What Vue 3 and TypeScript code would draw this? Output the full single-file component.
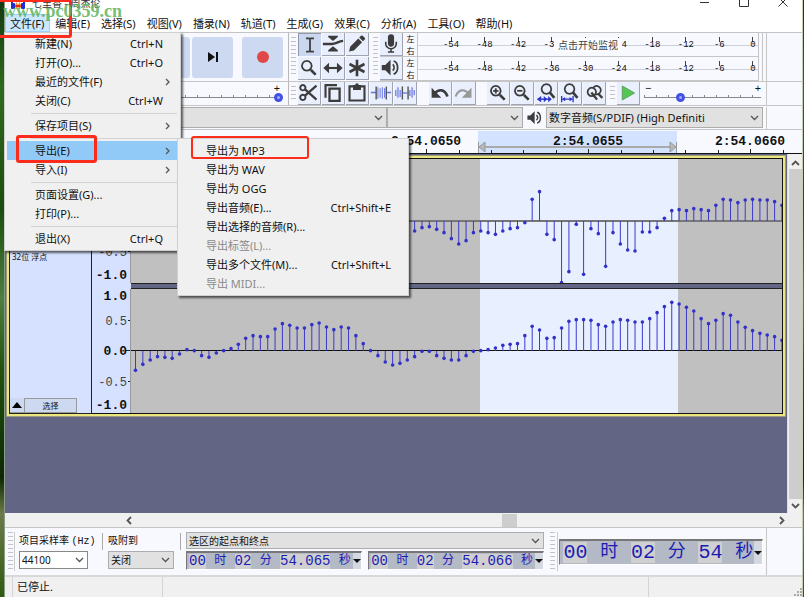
<script setup lang="ts">
import { ref } from 'vue'

interface Shape { d: string; w?: number; c?: string }
interface MenuRow { label?: string; keys?: string; sub?: boolean; active?: boolean; off?: boolean }

const menus = ['文件(F)', '编辑(E)', '选择(S)', '视图(V)', '播录(N)', '轨道(T)', '生成(G)', '效果(C)', '分析(A)', '工具(O)', '帮助(H)']

const fileMenu: MenuRow[] = [
  { label: '新建(N)', keys: 'Ctrl+N' },
  { label: '打开(O)...', keys: 'Ctrl+O' },
  { label: '最近的文件(F)', sub: true },
  { label: '关闭(C)', keys: 'Ctrl+W' },
  {},
  { label: '保存项目(S)', sub: true },
  {},
  { label: '导出(E)', sub: true, active: true },
  { label: '导入(I)', sub: true },
  {},
  { label: '页面设置(G)...' },
  { label: '打印(P)...' },
  {},
  { label: '退出(X)', keys: 'Ctrl+Q' },
]

const exportMenu: MenuRow[] = [
  { label: '导出为 MP3' },
  { label: '导出为 WAV' },
  { label: '导出为 OGG' },
  { label: '导出音频(E)...', keys: 'Ctrl+Shift+E' },
  { label: '导出选择的音频(R)...' },
  { label: '导出标签(L)...', off: true },
  { label: '导出多个文件(M)...', keys: 'Ctrl+Shift+L' },
  { label: '导出 MIDI...', off: true },
]

const lens = 'M10 4.5a5.5 5.5 0 1 0 .01 0zM14 14l6 6'
const icons: Record<string, Shape[]> = {
  ibeam: [{ d: 'M8 5h3.5l1 1 1-1H17M12.5 6v13M8 20h3.5l1-1 1 1H17', w: 2 }],
  envelope: [{ d: 'M7 3h11v1.5L12.5 9 7 4.500zM7 21h11v-1.500L12.500 15 7 19.500z' }, { d: 'M1 12.500h10c5 0 7-3 13-3.500', w: 2.6 }],
  pencil: [{ d: 'M3.500 21l1.200-5.500L14 6.200l4.300 4.300L9 19.800zM15 5.200l2-2a1.500 1.500 0 0 1 2 0L21.300 5.500a1.500 1.500 0 0 1 0 2l-2 2z' }],
  lens: [{ d: lens, w: 2 }, { d: 'M15 15l5 5', w: 3 }],
  shift: [{ d: 'M5 12.500h15', w: 2.4 }, { d: 'M8 6.500v12l-6.500-6zM17 6.500v12l6.500-6z' }],
  multi: [{ d: 'M12.500 3v19M4 8l17 9M21 8L4 17', w: 3 }],
  mic: [{ d: 'M9 5a3.500 3.500 0 0 1 7 0v7a3.500 3.500 0 0 1-7 0z' }, { d: 'M6.500 10v2a6 6 0 0 0 12 0v-2M12.500 18v4M9 21.500h7', w: 1.8 }],
  speaker: [{ d: 'M2 9h4l6-6v18l-6-6H2z' }, { d: 'M14.500 8.500c2 2 2 5 0 7M15.500 4.500c6 2 6 13 0 15', w: 2 }],
  cut: [{ d: 'M8 8.500L21 20M8 15.500L21 4', w: 2.6 }, { d: 'M5.500 3.500a3 3 0 1 0 .01 0zM5.500 14.500a3 3 0 1 0 .01 0z', w: 2.2 }],
  copy: [{ d: 'M4 18V3.500h13', w: 2.4 }, { d: 'M8.500 7.500h11.500v14H8.500z', w: 2.6 }],
  paste: [{ d: 'M4 5h17v16H4z', w: 2.4 }, { d: 'M8 3.500h2.500a2 2 0 0 1 4 0H17V9H8z' }],
  trim: [{ d: 'M1 12h6M18 12h6', w: 1.6, c: '#6674e0' }, { d: 'M9 6v13M11.500 7v11M14 6v13M16.500 7v11', w: 1.2, c: '#6f7de8' }, { d: 'M7 5v15M18.500 5v15', w: 1.6, c: '#555' }],
  silence: [{ d: 'M2 9v7M4.500 6v12M7 9v8M18 9v7M20.500 6v12M23 9v6', w: 1.6, c: '#7a86ea' }, { d: 'M9.500 5v15M16 5v15', w: 1.6, c: '#555' }, { d: 'M10 12.500h6', w: 1.5, c: '#6674e0' }],
  undo: [{ d: 'M6.500 13C11 7.500 18 8 21 16.500', w: 3 }, { d: 'M3 6.500v11.500h11z' }],
  redo: [{ d: 'M17.500 13C13 7.500 6 8 3 16.500', w: 2.4, c: '#999' }, { d: 'M21 6.500v11.500H10z', c: '#999' }],
  zoomin: [{ d: lens, w: 2 }, { d: 'M7 10h6M10 7v6', w: 2 }, { d: 'M15 15l5 5', w: 3 }],
  zoomout: [{ d: lens, w: 2 }, { d: 'M7 10h6', w: 2 }, { d: 'M15 15l5 5', w: 3 }],
  fitsel: [{ d: 'M13 2.500a5.500 5.500 0 1 0 .01 0z', w: 2 }, { d: 'M17 12l5 6', w: 3 }, { d: 'M4 19.500h14', w: 1.6, c: '#2b35c8' }, { d: 'M7 16v7l-5-3.500zM10 16v7l4-3.500zM15 16v7l4-3.500z', c: '#2b35c8' }],
  fitproj: [{ d: 'M12 2.500a5.500 5.500 0 1 0 .01 0z', w: 2 }, { d: 'M16 12l5 6', w: 3 }, { d: 'M3 16v7M16 16v7M4 19.500h11', w: 1.5, c: '#2b35c8' }, { d: 'M7 17v5l-3.500-2.500zM12 17v5l3.500-2.500z', c: '#2b35c8' }],
  toggle: [{ d: 'M10 6.500a4.800 4.800 0 1 0 .01 0zM12 6a4.800 4.800 0 1 1 2.500 8', w: 2 }, { d: 'M9.500 12l6.500 8M17 13l5 5', w: 2.6 }],
  play: [{ d: 'M6 4.500v16l14-8z', c: '#53c653' }],
}

const toolRows = [['ibeam', 'envelope', 'pencil'], ['lens', 'shift', 'multi']]
const editTools = ['cut', 'copy', 'paste', 'trim', 'silence']
const zoomTools = ['zoomin', 'zoomout', 'fitsel', 'fitproj', 'toggle']
// The record meter's hint lies over the -30 mark, which is left blank there.
const meters = [
  { icon: 'mic', tip: '点击开始监视', marks: ['-54', '-48', '-42', '-36', '', '-24', '-18', '-12', '-6', '0'] },
  { icon: 'speaker', tip: '', marks: ['-54', '-48', '-42', '-36', '-30', '-24', '-18', '-12', '-6', '0'] },
]

const rulerTicks = Array.from({ length: 20 }, (_, i) => ({ x: 162 + Math.round(i * 32.4), major: i % 5 === 3 }))
const rulerLabels = [{ x: 421, t: '2:54.0650' }, { x: 583, t: '2:54.0655' }, { x: 745, t: '2:54.0660' }]

// Sample levels, positive upwards; 186 is full scale.
const leftLevels = [
  -43, -30, -20, -17, -25, -35, -53, -69, -59, -35, -30, -35, -40, -30, -23, -20, -5, 65, 88, -40, -56, -185, -152, -10,
  -160, -23, -38, -136, -35, -69, -87, -90, -33, -33, -20, 8, 31, 34, 31, 37, 34, 31, 47, 65, 63, 55, 63, 65, 63, 63, 58, 47,
]
const rightLevels = [
  -58, -40, -27, -17, -19, -22, -9, 4, 1, -14, -19, -6, 1, 7, 20, 38, 46, 43, 43, 66, 82, 77, 69, 69, 79, 84, 72, 64, 72, 69,
  46, 22, 1, -14, -33, -42, -37, -27, -17, -1, -1, -14, -22, -27, -27, -14, -1, 1, 4, 9, 17, 20, 22, 46, 74, 63, 38, 40, 69,
  89, 94, 94, 92, 79, 74, 87, 94, 92, 87, 87, 97, 115, 133, 146, 141, 131, 120, 97, 82, 92, 112, 107, 87, 71, 61, 53, 48, 43, 32,
]
const plot = (levels: number[], first: number) =>
  levels.map((v, i) => ({ x: 4.5 + (first + i) * 7.346, y: 62 - v / 3 }))
const channels = [plot(leftLevels, 37), plot(rightLevels, 0)]
const axis = [
  { t: '1.0', y: 11, b: true }, { t: '0.5', y: 36, b: false }, { t: '0.0', y: 66, b: true },
  { t: '-0.5', y: 97, b: false }, { t: '-1.0', y: 120, b: true },
]

const startTime = ['00', '时', '02', '分', '54.065', '秒']
const endTime = ['00', '时', '02', '分', '54.066', '秒']
const position = ['00', '时', '02', '分', '54', '秒']
const recordGain = ref(100)
const speed = ref(30)
const rate = ref('44100')
</script>

<template>
  <div class="desktop">
    <div class="window">
      <header class="titlebar">
        <svg class="logo" width="14" height="14" viewBox="0 0 14 14">
          <path d="M1 9V6a6 6 0 0 1 12 0v3" fill="none" stroke="#1d2fd0" stroke-width="2" />
          <rect x="0" y="7" width="4" height="6" rx="1" fill="#1d2fd0" />
          <rect x="10" y="7" width="4" height="6" rx="1" fill="#1d2fd0" />
          <path d="M4 9l1.500-3 1.500 3 1.500-3L10 9v2l-1.500 2L7 11l-1.500 2L4 11z" fill="#f08a1c" />
          <path d="M4.500 10h5" stroke="#e3261c" stroke-width="2" />
        </svg>
        <span class="caption">七里香 - 周杰伦</span>
        <div class="winbtns">
          <button aria-label="最小化"><svg width="10" height="10"><path d="M0 5.500h9" stroke="#333" /></svg></button>
          <button aria-label="最大化"><svg width="10" height="10"><path d="M.5.5h9v9h-9z" fill="none" stroke="#333" /></svg></button>
          <button aria-label="关闭窗口"><svg width="10" height="10"><path d="M.5.5l9 9M9.500.5l-9 9" stroke="#333" /></svg></button>
        </div>
      </header>

      <nav class="menubar">
        <button v-for="(m, i) in menus" :key="m" :class="{ open: i === 0 }">{{ m }}</button>
      </nav>

      <section class="dock row-a">
        <div class="left-bar transport">
          <button aria-label="跳至开头"></button>
          <button aria-label="跳至结尾">
            <svg width="14" height="14"><path d="M2 2v10l7-5z" fill="#111" /><path d="M11 2v10" stroke="#111" stroke-width="2" /></svg>
          </button>
          <button class="rec" aria-label="录制"><svg width="14" height="14"><circle cx="7" cy="7" r="6" fill="#e04848" /></svg></button>
        </div>
        <div class="grip"></div>
        <div class="toolgrid">
          <div v-for="(row, r) in toolRows" :key="r" class="strip">
            <button v-for="n in row" :key="n" class="tool" :class="{ down: n === 'ibeam' }" :aria-label="n">
              <svg viewBox="0 0 25 25"><path v-for="(s, k) in icons[n]" :key="k" :d="s.d" :fill="s.w ? 'none' : s.c || '#3c3c3c'" :stroke="s.w ? s.c || '#3c3c3c' : 'none'" :stroke-width="s.w" /></svg>
            </button>
          </div>
        </div>
        <div class="grip narrow"></div>
        <div class="meters">
          <div v-for="m in meters" :key="m.icon" class="meter">
            <button class="tool" :aria-label="m.icon">
              <svg viewBox="0 0 25 25"><path v-for="(s, k) in icons[m.icon]" :key="k" :d="s.d" :fill="s.w ? 'none' : '#3c3c3c'" :stroke="s.w ? '#3c3c3c' : 'none'" :stroke-width="s.w" /></svg>
            </button>
            <div class="lr"><span>左</span><span>右</span></div>
            <div class="scale">
              <span v-for="(t, i) in m.marks" :key="i">{{ t }}</span>
              <em v-if="m.tip">{{ m.tip }}</em>
            </div>
          </div>
        </div>
        <div class="rest"></div>
      </section>

      <section class="dock row-b">
        <div class="left-bar mixer">
          <span class="plus">+</span>
          <input v-model="recordGain" type="range" aria-label="录制音量" />
        </div>
        <div class="grip"></div>
        <div class="strip">
          <button v-for="n in editTools" :key="n" class="tool" :aria-label="n">
            <svg viewBox="0 0 25 25"><path v-for="(s, k) in icons[n]" :key="k" :d="s.d" :fill="s.w ? 'none' : s.c || '#3c3c3c'" :stroke="s.w ? s.c || '#3c3c3c' : 'none'" :stroke-width="s.w" /></svg>
          </button>
        </div>
        <div class="strip undo">
          <button v-for="n in ['undo', 'redo']" :key="n" class="tool" :aria-label="n">
            <svg viewBox="0 0 25 25"><path v-for="(s, k) in icons[n]" :key="k" :d="s.d" :fill="s.w ? 'none' : s.c || '#3c3c3c'" :stroke="s.w ? s.c || '#3c3c3c' : 'none'" :stroke-width="s.w" /></svg>
          </button>
        </div>
        <div class="strip">
          <button v-for="n in zoomTools" :key="n" class="tool" :aria-label="n">
            <svg viewBox="0 0 25 25"><path v-for="(s, k) in icons[n]" :key="k" :d="s.d" :fill="s.w ? 'none' : s.c || '#3c3c3c'" :stroke="s.w ? s.c || '#3c3c3c' : 'none'" :stroke-width="s.w" /></svg>
          </button>
        </div>
        <div class="grip narrow"></div>
        <button class="tool" aria-label="播放">
          <svg viewBox="0 0 25 25"><path :d="icons.play[0].d" :fill="icons.play[0].c" stroke="#5a9a5a" /></svg>
        </button>
        <div class="speed">
          <div class="ends"><span>−</span><span>+</span></div>
          <input v-model="speed" type="range" aria-label="播放速度" />
        </div>
        <div class="rest"></div>
      </section>

      <section class="dock row-c">
        <div class="combo host"><select aria-label="音频主机"><option></option></select><svg class="chev" width="9" height="6"><path d="M1 1l3.500 3.500L8 1" /></svg></div>
        <div class="combo input"><select aria-label="录音设备"><option></option></select><svg class="chev" width="9" height="6"><path d="M1 1l3.500 3.500L8 1" /></svg></div>
        <svg class="spk" viewBox="0 0 25 25"><path v-for="(s, k) in icons.speaker" :key="k" :d="s.d" :fill="s.w ? 'none' : '#3c3c3c'" :stroke="s.w ? '#3c3c3c' : 'none'" :stroke-width="s.w" /></svg>
        <div class="combo output"><select aria-label="播放设备"><option>数字音频(S/PDIF) (High Definiti</option></select><svg class="chev" width="9" height="6"><path d="M1 1l3.500 3.500L8 1" /></svg></div>
        <div class="rest"></div>
      </section>

      <svg class="ruler">
        <rect x="473" y="1" width="199" height="23" fill="#d3e2ff" />
        <path d="M480 17h185" stroke="#aaa" stroke-width="2" />
        <path d="M474 17l6-5v10zM671 17l-6-5v10z" fill="#b8b8b8" stroke="#999" />
        <path d="M473.500 12v11M671.500 12v11" stroke="#999" />
        <path v-for="t in rulerTicks" :key="t.x" :d="`M${t.x + 0.5} ${t.major ? 19 : 20}v5`" stroke="#222" />
        <text v-for="l in rulerLabels" :key="l.t" :x="l.x" y="15">{{ l.t }}</text>
      </svg>

      <main class="workspace">
        <div class="tracks">
          <div class="track">
            <aside class="info">
              <p>32位 浮点</p>
              <div class="foot"><button aria-label="折叠"><svg width="10" height="6"><path d="M0 6L5 0l5 6z" /></svg></button><button class="pick">选择</button></div>
            </aside>
            <div class="channels">
              <template v-for="(points, c) in channels" :key="c">
                <div v-if="c" class="divider"></div>
                <div class="channel">
                  <svg class="axis">
                    <text v-for="a in axis" :key="a.t" x="35" :y="a.y" :class="{ b: a.b }">{{ a.t }}</text>
                    <path d="M36 31.500h3M34 61.500h5M36 92.500h3" stroke="#222" />
                  </svg>
                  <svg class="wave">
                    <rect x="349" y="0" width="198" height="124" fill="#e8f0ff" />
                    <path :d="c ? 'M0 61.500h2000' : 'M0 62h2000'" :stroke="c ? '#111' : '#777'" :stroke-width="c ? 1 : 2" />
                    <g v-for="(p, i) in points" :key="i">
                      <path :d="`M${p.x} 62V${p.y}`" stroke="#3a3acb" />
                      <circle :cx="p.x" :cy="p.y" r="1.8" fill="#3232c8" />
                    </g>
                  </svg>
                </div>
              </template>
            </div>
          </div>
        </div>
        <div class="vscroll">
          <svg width="9" height="6"><path d="M1 5l3.500-3.500L8 5" /></svg>
          <div class="thumb"></div>
          <svg width="9" height="6"><path d="M1 1l3.500 3.500L8 1" /></svg>
        </div>
      </main>

      <div class="hscroll">
        <svg width="6" height="9"><path d="M5 1L1.500 4.500 5 8" /></svg>
        <div class="rail"><div class="thumb"></div></div>
        <svg width="6" height="9"><path d="M1 1l3.500 3.500L1 8" /></svg>
      </div>

      <section class="selbar">
        <div class="grip"></div>
        <div class="field rate">
          <label for="rate">项目采样率 <i>(Hz)</i></label>
          <div class="combo white"><input id="rate" v-model="rate" type="text" /><svg class="chev" width="9" height="6"><path d="M1 1l3.500 3.500L8 1" /></svg></div>
        </div>
        <div class="field snap">
          <label for="snap">吸附到</label>
          <div class="combo"><select id="snap"><option>关闭</option></select><svg class="chev" width="9" height="6"><path d="M1 1l3.500 3.500L8 1" /></svg></div>
        </div>
        <div class="range">
          <div class="combo"><select aria-label="选区显示"><option>选区的起点和终点</option></select><svg class="chev" width="9" height="6"><path d="M1 1l3.500 3.500L8 1" /></svg></div>
          <div class="times">
            <div v-for="(set, s) in [startTime, endTime]" :key="s" class="time">
              <span v-for="(t, i) in set" :key="i" :class="{ num: i % 2 === 0 }">{{ t }}</span>
              <button aria-label="时间格式"><svg width="8" height="4"><path d="M0 0h8L4 4z" /></svg></button>
            </div>
          </div>
        </div>
        <div class="grip second"></div>
        <div class="time big">
          <span v-for="(t, i) in position" :key="i" :class="{ num: i % 2 === 0 }">{{ t }}</span>
          <button aria-label="时间格式"><svg width="8" height="4"><path d="M0 0h8L4 4z" /></svg></button>
        </div>
        <div class="rest"></div>
      </section>

      <footer class="status">
        <span>已停止.</span><span></span>
        <span><svg width="9" height="9"><path d="M7 1h2M4 4h2M7 4h2M1 7h2M4 7h2M7 7h2" stroke="#aaa" stroke-width="2" /></svg></span>
      </footer>
    </div>

    <div class="menu file" role="menu">
      <template v-for="(row, i) in fileMenu" :key="i">
        <button v-if="row.label" role="menuitem" :class="{ active: row.active }">
          <span>{{ row.label }}</span>
          <kbd v-if="row.keys">{{ row.keys }}</kbd>
          <svg v-if="row.sub" class="arrow" width="5" height="8"><path d="M1 1l3 3-3 3" /></svg>
        </button>
        <hr v-else />
      </template>
    </div>
    <div class="menu export" role="menu">
      <button v-for="row in exportMenu" :key="row.label" role="menuitem" :disabled="row.off">
        <span>{{ row.label }}</span><kbd v-if="row.keys">{{ row.keys }}</kbd>
      </button>
    </div>

    <div class="mark mark-file"></div>
    <div class="mark mark-export"></div>
    <div class="mark mark-mp3"></div>
    <div class="watermark">www.pc0359.cn</div>
  </div>
</template>

<style>
body { margin: 0; overflow: hidden; }
</style>

<style scoped>
* { box-sizing: border-box; }
.desktop {
  position: relative; min-height: 100vh; display: flex; padding: 0 1px 0 4px; overflow: hidden;
  background: linear-gradient(#123a12, #2f6a1c 15%, #1c4d10 35%, #4d8040 50%, #20520f 62%, #0c2806 80%, #6d7a48 86%, #2f5a10);
  font: 11px/14px "Noto Sans", "Noto Sans CJK SC", sans-serif; color: #111;
}
button, select, input { font: inherit; color: inherit; margin: 0; padding: 0; border: 0; background: none; border-radius: 0; outline: 0; }
.window { flex: 1; min-width: 0; display: flex; flex-direction: column; background: #f7f9ff; border-left: 1px solid #8a9a86; border-right: 1px solid #c5cfb4; }
.titlebar { height: 26px; margin-top: -12px; display: flex; align-items: center; background: #fff; padding-left: 6px; flex: none; }
.caption { margin-left: 7px; font-size: 10px; line-height: 12px; padding-top: 4px; color: #333; }
.logo { margin-top: 4px; }
.winbtns { margin-left: auto; display: flex; gap: 29px; padding: 2px 14px 0 0; }
.winbtns button { width: 10px; height: 10px; display: flex; }
.menubar { height: 19px; display: flex; background: #fff; border-bottom: 1px solid #c4c4c4; flex: none; }
.menubar button { padding: 0 6px 0 5px; white-space: nowrap; line-height: 17px; }
.menubar button.open { background: #cce8ff; border: 1px solid #99d1ff; padding: 0 5px 0 4px; line-height: 15px; }

.dock { display: flex; flex: none; border-bottom: 1px solid #c6c6c6; background: #f7f9ff; }
.row-a { height: 49px; }
.row-b, .row-c { height: 24px; }
.left-bar { width: 284px; flex: none; border-right: 1px solid #b8b8b8; }
.transport { display: flex; justify-content: flex-end; align-items: center; gap: 2px; padding-right: 5px; }
.transport button { width: 41px; height: 41px; border-radius: 3px; background: #cdd9f1; display: flex; align-items: center; justify-content: center; }
.transport .rec { margin-left: 7px; }
.grip { width: 8px; flex: none; margin: 4px 1px 4px 0; background: repeating-linear-gradient(#c2c2c8 0 1px, transparent 1px 4px) 2px 0 / 5px 100% no-repeat; }
.grip.narrow { margin-left: 2px; margin-right: 1px; }
.toolgrid { display: flex; flex-direction: column; }
.strip { display: flex; gap: 1px; }
.tool { width: 23px; height: 23px; flex: none; background: #e9effc; border-right: 1px solid #a0a4b0; border-bottom: 1px solid #a0a4b0; display: flex; align-items: center; justify-content: center; }
.toolgrid .strip { height: 24px; }
.tool svg { width: 22px; height: 22px; flex: none; }
.tool.down { background: #cbd7ef; border: 1px solid #8f98ac; border-width: 1px 0 0 1px; }
.meters { flex: 1; min-width: 0; border-right: 1px solid #c6c6c6; padding-right: 3px; }
.meter { height: 24px; display: flex; border-bottom: 1px solid #c6c6c6; }
.lr { width: 13px; display: flex; flex-direction: column; align-items: center; font-size: 8px; line-height: 12px; padding-left: 2px; }
.scale { position: relative; flex: 1; display: flex; justify-content: space-between; margin-left: 1px; padding: 0 1px 0 29px; border-left: 1px solid #c6c6c6; border-right: 1px solid #c6c6c6; font: 9px/10px "Liberation Mono", monospace; background: linear-gradient(#ccd0da, #ccd0da) 0 12px / 100% 1px no-repeat; }
.scale span { width: 8px; display: flex; justify-content: center; padding-top: 7px; background: linear-gradient(#444, #444) 50% 4px / 1px 5px no-repeat; }
.scale em { position: absolute; left: 40%; top: 5px; padding: 0 4px; background: #fbfcff; font: 10px/14px "Noto Sans CJK SC", sans-serif; color: #444; }
.rest { width: 36px; flex: none; margin-left: 3px; border-left: 1px solid #c6c6c6; }
.mixer { position: relative; padding: 8px 5px 0 0; }
.plus { position: absolute; right: 8px; top: 0; line-height: 11px; }
input[type="range"] { appearance: none; display: block; width: 100%; height: 14px; background: linear-gradient(#8a8a8a, #8a8a8a) 0 7px / 100% 1px no-repeat, repeating-linear-gradient(90deg, #8a8a8a 0 1px, transparent 1px 12px) 0 5px / 100% 2px no-repeat; }
input[type="range"]::-webkit-slider-thumb { appearance: none; width: 9px; height: 9px; border-radius: 50%; background: #9fb0f8; border: 3px solid #4350e6; }
.undo { margin: 0 11px 0 12px; }
.speed { flex: 1; position: relative; padding: 8px 5px 0 4px; }
.ends { position: absolute; left: 5px; right: 5px; top: 0; display: flex; justify-content: space-between; line-height: 11px; }
.row-b .rest, .row-c .rest { margin-left: 0; width: 36px; }

.combo { position: relative; display: flex; background: #e1e1e1; border: 1px solid #adadad; min-width: 0; }
.combo select, .combo input { appearance: none; flex: 1; width: 100%; min-width: 0; padding: 0 18px 0 2px; white-space: nowrap; }
.chev { position: absolute; right: 3px; top: 50%; margin-top: -3px; pointer-events: none; }
.chev path, .arrow path { fill: none; stroke: #555; stroke-width: 1.300; }
.vscroll path, .hscroll path { fill: none; stroke: #555; stroke-width: 1.800; }
.row-c { align-items: stretch; padding-top: 1px; }
.row-c .combo { margin-bottom: 1px; }
.host { flex: 384 1 0; }
.input { flex: 135 1 0; }
.output { flex: 217 1 0; margin-right: 3px; }
.spk { width: 18px; height: 18px; margin: 2px 2px 0 3px; flex: none; }

.ruler { width: 100%; height: 24px; flex: none; display: block; border-bottom: 1px solid #111; }
.ruler text { font: bold 13px "Liberation Mono", monospace; text-anchor: middle; fill: #111; }
.workspace { flex: 1; min-height: 0; display: flex; }
.tracks { flex: 1; min-width: 0; background: #636585; padding: 2px 2px 0; }
.track { display: flex; border: 2px solid #ebe67e; outline: 1px solid #9a9a80; }
.info { width: 83px; flex: none; display: flex; flex-direction: column; justify-content: space-between; background: #d5e1ff; border: 1px solid #222; }
.info p { margin: 92px 0 0 2px; font-size: 8px; line-height: 12px; }
.foot { display: flex; }
.foot button { width: 15px; height: 15px; border: 1px solid #999; border-width: 0 1px 1px 0; background: #cdd9f1; display: flex; align-items: center; justify-content: center; }
.foot .pick { width: 52px; border-top-width: 1px; font-size: 8px; }
.channels { flex: 1; min-width: 0; border: 1px solid #111; border-left: 0; background: #d5e1ff; }
.channel { display: flex; height: 124px; }
.divider { height: 6px; margin-left: 39px; background: #636585; border: 1px solid #222; border-width: 1px 0; }
.axis { width: 39px; height: 124px; flex: none; border-right: 1px solid #999; }
.axis text { font: 12px "Liberation Mono", monospace; text-anchor: end; fill: #444; }
.axis text.b { font-weight: bold; font-size: 13px; fill: #111; }
.wave { flex: 1; min-width: 0; height: 124px; background: #c0c0c0; overflow: hidden; }
.vscroll { width: 15px; flex: none; background: #f0f0f0; display: flex; flex-direction: column; align-items: center; padding: 6px 0 4px; border-left: 1px solid #ddd; }
.vscroll .thumb { flex: 1; width: 13px; background: #cdcdcd; margin: 3px 0 4px; }
.hscroll { height: 15px; flex: none; display: flex; align-items: center; background: #f0f0f0; border-bottom: 1px solid #c6c6c6; padding: 0 17px 0 121px; }
.rail { flex: 1; display: flex; padding-left: 370px; }
.rail .thumb { width: 15px; height: 13px; background: #cdcdcd; }

.selbar { height: 49px; flex: none; display: flex; border-bottom: 2px solid #d8d8d8; background: #f7f9ff; }
.selbar .grip { border-right: 1px solid #ccc; width: 9px; margin: 4px 4px 4px 1px; }
.field { display: flex; flex-direction: column; padding-top: 5px; font-size: 10px; }
.field label { height: 17px; line-height: 15px; white-space: nowrap; margin-right: 6px; border-right: 1px solid #aaa; margin-bottom: 1px; }
.field label i { font: 10px "Liberation Mono", monospace; }
.field .combo { height: 18px; }
.rate { width: 84px; margin-right: 5px; }
.rate label { margin-right: 0; }
.rate .combo { margin-right: 15px; }
.snap { width: 78px; }
.snap label { margin-right: 5px; }
.snap .combo { margin-right: 12px; }
.white { background: #fff; border-color: #888; }
.range { flex: 361 1 0; min-width: 0; padding-top: 4px; display: flex; flex-direction: column; gap: 2px; font-size: 10px; }
.range .combo { height: 17px; }
.times { display: flex; gap: 6px; }
.time { flex: 1; height: 19px; display: flex; align-items: center; justify-content: space-between; background: #b3b9c5; border: 1px solid #fff; border-top: 2px solid #777; border-left: 1px solid #777; padding-left: 2px; font: 14px/15px "Liberation Mono", "Noto Sans CJK SC", monospace; color: #1c1cb4; }
.time .num { background: #d0d0d0; }
.time span:not(.num) { font-size: 12px; }
.time button { width: 8px; height: 100%; background: #d4d8e0; display: flex; align-items: center; margin-left: -6px; }
.time button path { fill: #111; }
.selbar .second { margin: 4px 1px 4px 4px; width: 10px; }
.time.big { flex: 200 1 0; min-width: 0; height: 26px; margin-top: 11px; padding-left: 3px; font-size: 20px; line-height: 21px; }
.time.big button { margin-left: -12px; }
.big span:not(.num) { font-size: 18px; }
.status { height: 20px; flex: none; display: flex; background: #f0f0f0; padding-left: 7px; }
.status span { border-left: 1px solid #d4d4d4; padding: 3px 0 0 4px; }
.status span:nth-child(1) { width: 150px; }
.status span:nth-child(2) { flex: 1; }
.status span:nth-child(3) { width: 154px; display: flex; justify-content: flex-end; align-items: flex-end; }

.menu { position: absolute; background: #f0f0f0; border: 1px solid #d0d0d0; box-shadow: 2px 2px 2px #0009; display: flex; flex-direction: column; }
.menu button { height: 19px; flex: none; display: flex; align-items: center; text-align: left; padding: 0 17px 0 28px; white-space: nowrap; }
.menu button.active { background: #91c9f7; }
.menu button:disabled { color: #8a8a8a; }
.menu kbd { font: inherit; margin-left: auto; }
.menu .arrow { margin-left: auto; margin-right: -9px; }
.menu hr { width: calc(100% - 24px); margin: 3px 0 2px 24px; border: 0; border-top: 1px solid #d2d2d2; }
.menu.file { left: 4px; top: 32px; width: 177px; padding: 1px 3px 2px 2px; }
.menu.file button { padding-right: 14px; padding-left: 28px; }
.menu.file .arrow { margin-right: -7px; }
.menu.export { left: 177px; top: 138px; width: 232px; padding: 2px 0; }
.mark { position: absolute; border: 3px solid #fb2c1c; border-radius: 3px; pointer-events: none; }
.mark-file { left: -4px; top: -1px; width: 76px; height: 39px; }
.mark-export { left: 16px; top: 135px; width: 81px; height: 28px; }
.mark-mp3 { left: 191px; top: 136px; width: 118px; height: 23px; border-width: 2px; }
.watermark { position: absolute; left: 3px; top: 1px; font: bold 18px/20px "Liberation Serif", serif; color: #5fb45f; opacity: .85; pointer-events: none; }
</style>
